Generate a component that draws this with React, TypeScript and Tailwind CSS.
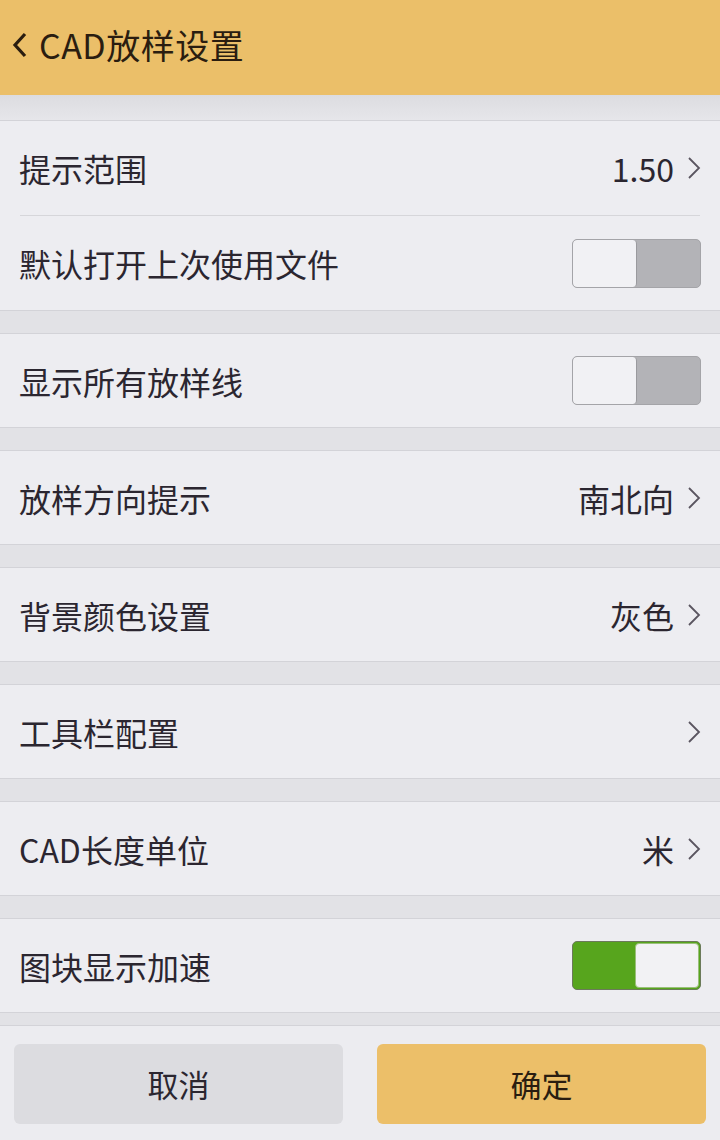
import React from "react";

const font = "font-['Noto_Sans_CJK_SC','Noto_Sans',sans-serif]";

function Chevron() {
  return (
    <svg width="14" height="24" viewBox="0 0 14 24" className="ml-[13px] shrink-0">
      <path d="M2 2 L12 12 L2 22" fill="none" stroke="#5a5560" strokeWidth="1.8" />
    </svg>
  );
}

function Toggle({ on }: { on: boolean }) {
  return on ? (
    <div className="flex h-[49px] w-[129px] overflow-hidden rounded-[5px] border border-[#6b7a5a] bg-[#57a51d]">
      <div className="flex-1" />
      <div className="m-[1px] w-[64px] rounded-[4px] border border-[#9abf7a] bg-[#f2f2f4]" />
    </div>
  ) : (
    <div className="flex h-[49px] w-[129px] overflow-hidden rounded-[5px] border border-[#a4a4a8] bg-[#b3b3b7]">
      <div className="w-[64px] rounded-[4px] border-r border-[#9a9a9e] bg-[#f1f1f4]" />
      <div className="flex-1" />
    </div>
  );
}

function Row({
  label,
  value,
  chevron,
  toggle,
  h = "h-[93px]",
}: {
  label: string;
  value?: string;
  chevron?: boolean;
  toggle?: boolean;
  h?: string;
}) {
  return (
    <div className={`flex items-center justify-between pl-[19px] pr-[19px] ${h}`}>
      <span className="text-[32px] leading-none text-[#2b2630]">{label}</span>
      <div className="flex items-center">
        {value && <span className="text-[32px] leading-none text-[#2b2630]">{value}</span>}
        {chevron && <Chevron />}
        {toggle !== undefined && <Toggle on={toggle} />}
      </div>
    </div>
  );
}

function Section({ children }: { children: React.ReactNode }) {
  return <div className="border-y border-[#d3d3d8] bg-[#ededf1]">{children}</div>;
}

function Gap() {
  return <div className="h-[22px] bg-[#e2e2e6]" />;
}

export default function App() {
  return (
    <div className={`flex h-[1140px] w-[720px] flex-col bg-[#e2e2e6] ${font}`}>
      <header className="flex h-[95px] items-center bg-[#ebbf69] pb-[6px] pl-[11px] shadow-[0_1px_3px_rgba(0,0,0,0.12)]">
        <svg width="18" height="28" viewBox="0 0 18 28" className="mr-[10px]">
          <path d="M14 3 L4 14 L14 25" fill="none" stroke="#2a1d10" strokeWidth="3.2" />
        </svg>
        <span className="text-[34px] leading-none tracking-[0.5px] text-[#2a1d10]">CAD放样设置</span>
      </header>

      <div className="h-[25px] bg-gradient-to-b from-[#dcdce0] to-[#e6e6ea]" />

      <Section>
        <Row label="提示范围" value="1.50" chevron h="h-[94px]" />
        <div className="mx-[20px] h-px bg-[#d6d6da]" />
        <Row label="默认打开上次使用文件" toggle={false} h="h-[94px]" />
      </Section>
      <Gap />
      <Section>
        <Row label="显示所有放样线" toggle={false} />
      </Section>
      <Gap />
      <Section>
        <Row label="放样方向提示" value="南北向" chevron />
      </Section>
      <Gap />
      <Section>
        <Row label="背景颜色设置" value="灰色" chevron />
      </Section>
      <Gap />
      <Section>
        <Row label="工具栏配置" chevron />
      </Section>
      <Gap />
      <Section>
        <Row label="CAD长度单位" value="米" chevron />
      </Section>
      <Gap />
      <Section>
        <Row label="图块显示加速" toggle={true} />
      </Section>

      <div className="h-[12px] bg-[#e2e2e6]" />
      <div className="flex flex-1 gap-[34px] border-t border-[#d3d3d8] bg-[#ececf0] px-[14px] pt-[18px]">
        <button className="h-[80px] flex-1 rounded-[6px] bg-[#dcdce0] text-[31px] text-[#2b2630]">
          取消
        </button>
        <button className="h-[80px] flex-1 rounded-[6px] bg-[#ecbf69] text-[31px] text-[#2a1d10]">
          确定
        </button>
      </div>
    </div>
  );
}
